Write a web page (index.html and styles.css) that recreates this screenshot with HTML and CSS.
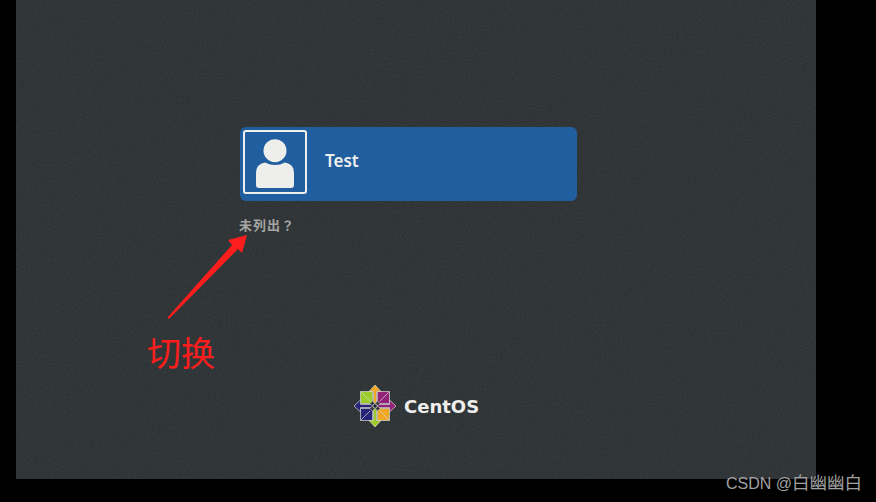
FILE: index.html
```html
<!DOCTYPE html>
<html lang="zh-CN">
<head>
  <meta charset="UTF-8" />
  <title>Login</title>
  <link rel="stylesheet" href="styles.css">
</head>
<body>
  <div class="screen">
    <svg class="grain" width="800" height="479">
      <filter id="grainFilter">
        <feTurbulence type="fractalNoise" baseFrequency="0.75" numOctaves="2" seed="4"/>
        <feColorMatrix type="matrix" values="0 0 0 0 1  0 0 0 0 1  0 0 0 0 1  1.4 0 0 0 -0.45"/>
      </filter>
      <rect width="800" height="479" filter="url(#grainFilter)"/>
    </svg>
    <div class="login">
      <div class="user-row">
        <div class="avatar">
          <svg width="60" height="60" viewBox="0 0 60 60">
            <circle cx="30" cy="18.700" r="11.500" fill="#eeeeec"/>
            <path d="M14 56q-3 0-3-3V41q0-9 9-10.500q10 5 20 0q9 1.500 9 10.500v12q0 3-3 3z" fill="#eeeeec"/>
          </svg>
        </div>
        <span class="user-name">Test</span>
      </div>
      <div class="not-listed" lang="zh-TW">未列出？</div>
    </div>
    <div class="brand">
      <svg width="44" height="44" viewBox="0 0 44 44">
        <g stroke="#d8d8d5" stroke-width="0.700" stroke-linejoin="round">
          <path d="M7.500 7.500h12v9.500l-2.500 2.500H7.500z" fill="#9ccd2a"/>
          <path d="M36.500 7.500v12h-9.500l-2.500-2.500V7.500z" fill="#932279"/>
          <path d="M36.500 36.500h-12v-9.500l2.500-2.500h9.500z" fill="#efa724"/>
          <path d="M7.500 36.500v-12h9.500l2.500 2.500v9.500z" fill="#262577"/>
          <path d="M22 1l6 6.500H23.500V18L22 19.500 20.500 18V7.500H16z" fill="#efa724"/>
          <path d="M43 22l-6.500 6V23.500H26L24.500 22l1.500-1.500h10.500V16z" fill="#932279"/>
          <path d="M22 43l-6-6.500H20.500V26L22 24.500 23.500 26v10.500H28z" fill="#9ccd2a"/>
          <path d="M1 22l6.500-6v4.500H18l1.500 1.500-1.500 1.500H7.500V28z" fill="#262577"/>
          <path d="M7.500 7.500l9.500 9.500M36.500 7.500l-9.500 9.500M36.500 36.500l-9.500-9.500M7.500 36.500l9.500-9.500" fill="none"/>
        </g>
        <circle cx="22" cy="22" r="2.200" fill="#22272a" stroke="#d8d8d5" stroke-width="0.800"/>
      </svg>
      <span class="brand-name">CentOS</span>
    </div>
  </div>

  <svg class="arrow" width="90" height="95" viewBox="0 0 90 95">
    <path d="M0.500 91.500L65 19l-4-5 19-5-5 18-4-4L2 93z" fill="#fb1e1c"/>
  </svg>
  <div class="note">切换</div>
  <div class="watermark">CSDN @<span class="watermark-name">白幽幽白</span></div>
</body>
</html>
```

FILE: styles.css
```css
* {
  box-sizing: border-box;
}

html, body {
  margin: 0;
  height: 100%;
}

body {
  background-color: #000;
  font-family: "Noto Sans", "Noto Sans CJK SC", sans-serif;
  overflow: hidden;
  position: relative;
}

.screen {
  width: 800px;
  height: 479px;
  margin-left: 16px;
  padding-top: 127px;
  background-color: #2d3235;
  display: flex;
  flex-direction: column;
  align-items: flex-start;
  position: relative;
}

.grain {
  position: absolute;
  left: 0;
  top: 0;
  opacity: 0.07;
}

.login {
  width: 337px;
  margin-left: 224px;
  position: relative;
}

.user-row {
  height: 74px;
  padding: 3px;
  background-color: #205e9f;
  border-radius: 6px;
  display: flex;
  align-items: flex-start;
  gap: 18px;
}

.avatar {
  width: 64px;
  height: 64px;
  border: 2px solid #eeeeec;
  border-radius: 3px;
  display: flex;
  align-items: center;
  justify-content: center;
}

.user-name {
  margin-top: 19px;
  color: #eeeeec;
  font-size: 17px;
  font-weight: 600;
}

.not-listed {
  margin-top: 15px;
  margin-left: -1px;
  color: #a5a6a3;
  font-family: "Noto Sans CJK TC", sans-serif;
  font-size: 13px;
  font-weight: 700;
  letter-spacing: 1px;
  line-height: 18px;
}

.brand {
  margin-top: 150px;
  margin-left: 337px;
  display: flex;
  align-items: center;
  gap: 7px;
  position: relative;
}

.brand-name {
  color: #eeeeec;
  font-family: "DejaVu Sans", sans-serif;
  font-size: 18px;
  font-weight: 700;
}

.arrow {
  position: absolute;
  left: 167px;
  top: 226px;
}

.note {
  position: absolute;
  left: 147px;
  top: 329px;
  color: #fb1e1c;
  font-size: 34px;
  line-height: 48px;
  font-weight: 400;
}

.watermark {
  position: absolute;
  left: 726px;
  top: 471px;
  color: #a0a0a0;
  font-family: "Liberation Sans", "Noto Sans CJK SC", sans-serif;
  font-size: 16px;
  line-height: 24px;
}

.watermark-name {
  font-size: 17.5px;
}
```
